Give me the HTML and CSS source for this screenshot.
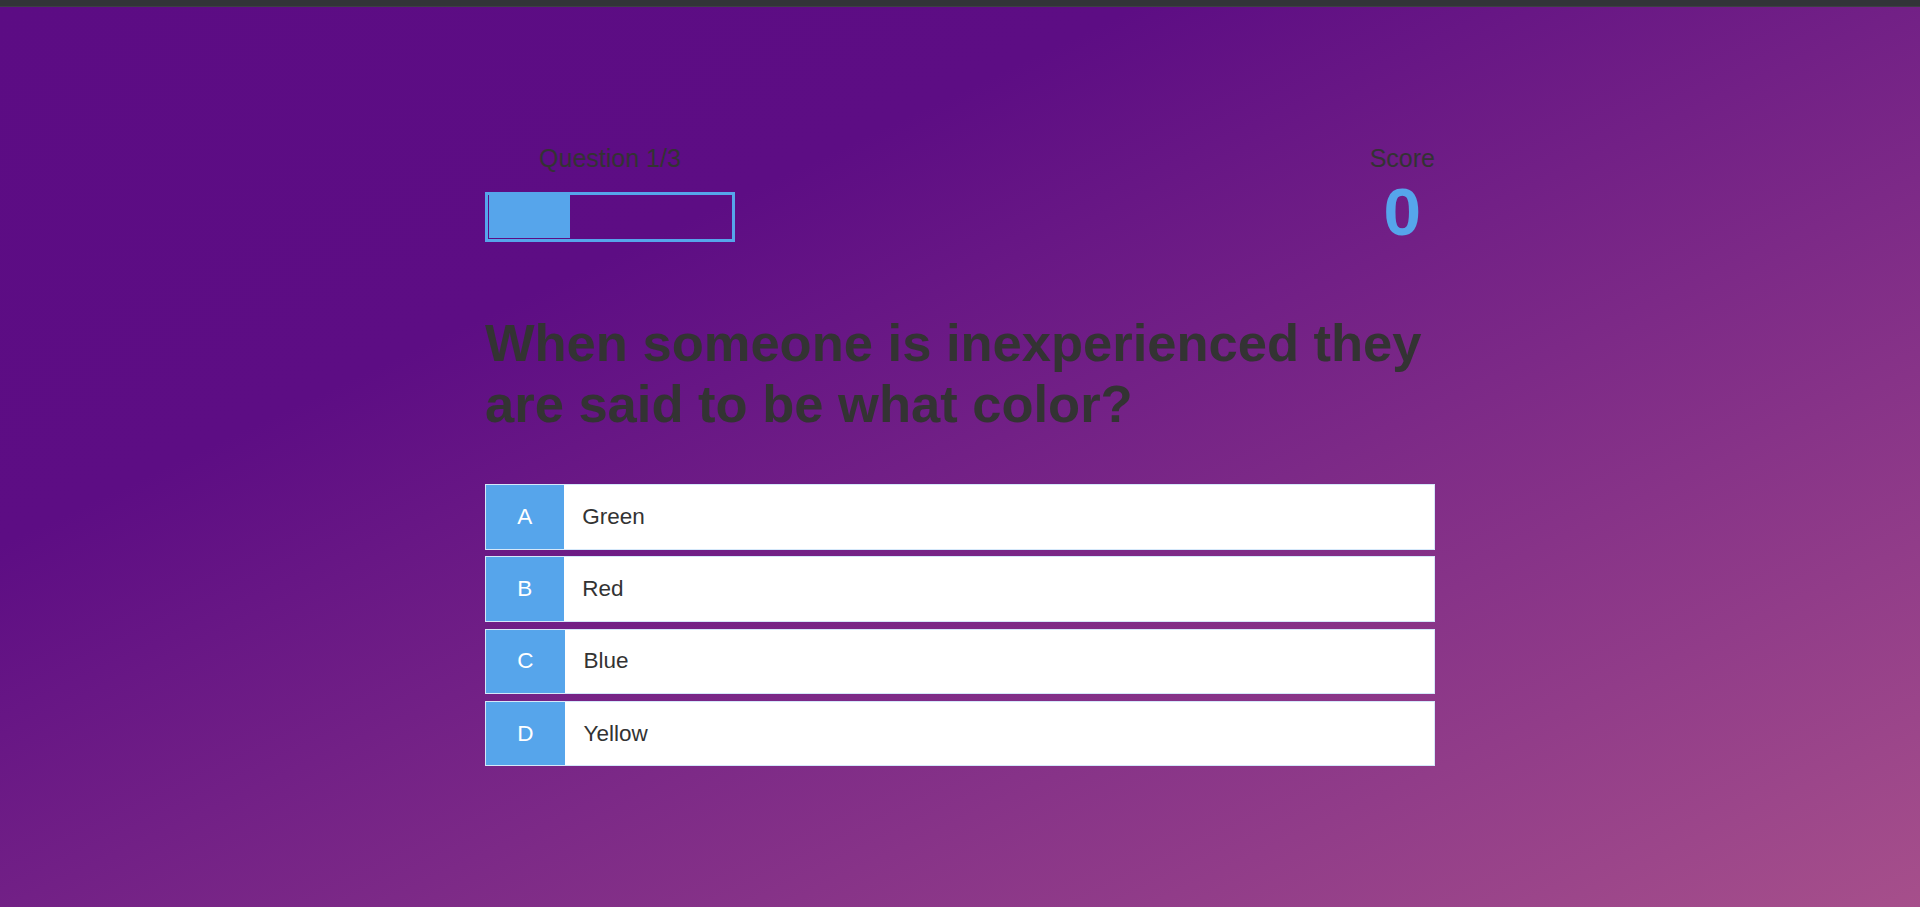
FILE: index.html
```html
<!DOCTYPE html>
<html lang="en">
<head>
<meta charset="utf-8">
<title>Quiz</title>
<link rel="stylesheet" href="styles.css">
</head>
<body>
<div class="topbar"></div>
<div class="container">
  <div class="hud">
    <div class="hud-item">
      <p class="hud-prefix">Question 1/3</p>
      <div class="progress-bar">
        <div class="progress-bar-full" style="width: 33.3333%"></div>
      </div>
    </div>
    <div class="hud-item">
      <p class="hud-prefix">Score</p>
      <h1 class="hud-main-text">0</h1>
    </div>
  </div>
  <h2 class="question">When someone is inexperienced they are said to be what color?</h2>
  <div class="choice-container">
    <p class="choice-prefix">A</p>
    <p class="choice-text">Green</p>
  </div>
  <div class="choice-container">
    <p class="choice-prefix">B</p>
    <p class="choice-text">Red</p>
  </div>
  <div class="choice-container">
    <p class="choice-prefix">C</p>
    <p class="choice-text">Blue</p>
  </div>
  <div class="choice-container">
    <p class="choice-prefix">D</p>
    <p class="choice-text">Yellow</p>
  </div>
</div>
</body>
</html>
```
FILE: styles.css
```css
* {
  box-sizing: border-box;
  margin: 0;
  padding: 0;
  font-family: "Liberation Sans", Arial, Helvetica, sans-serif;
  color: #333;
}

body {
  min-height: 100vh;
  background: linear-gradient(to bottom right, #5c0c84 0%, #5d0d84 30%, #a64f8b 100%);
}

.topbar {
  height: 7px;
  background: #323438;
  border-bottom: 1px solid #3d3f44;
}

.container {
  width: 950px;
  margin: 0 auto;
  padding-top: 137px;
}

.hud {
  display: flex;
  justify-content: space-between;
}

.hud-item {
  display: flex;
  flex-direction: column;
}

.hud-prefix {
  text-align: center;
  font-size: 25px;
}

.hud-main-text {
  text-align: center;
  font-size: 67.5px;
  font-weight: 700;
  color: #56a5eb;
}

.progress-bar {
  width: 250px;
  height: 50px;
  border: 3px solid #56a5eb;
  margin-top: 19px;
  padding-left: 1px;
}

.progress-bar-full {
  height: 42.5px;
  background-color: #56a5eb;
}

.question {
  font-size: 52.5px;
  font-weight: 700;
  margin-top: 62px;
  margin-bottom: 50px;
}

.choice-container {
  display: flex;
  width: 100%;
  margin-bottom: 6.75px;
  font-size: 22.5px;
  border: 1px solid rgba(86, 165, 235, 0.25);
  background-color: #fff;
}

.choice-prefix {
  padding: 18.75px 31.25px;
  background-color: #56a5eb;
  color: #fff;
}

.choice-text {
  padding: 18.75px;
  width: 100%;
}
```
